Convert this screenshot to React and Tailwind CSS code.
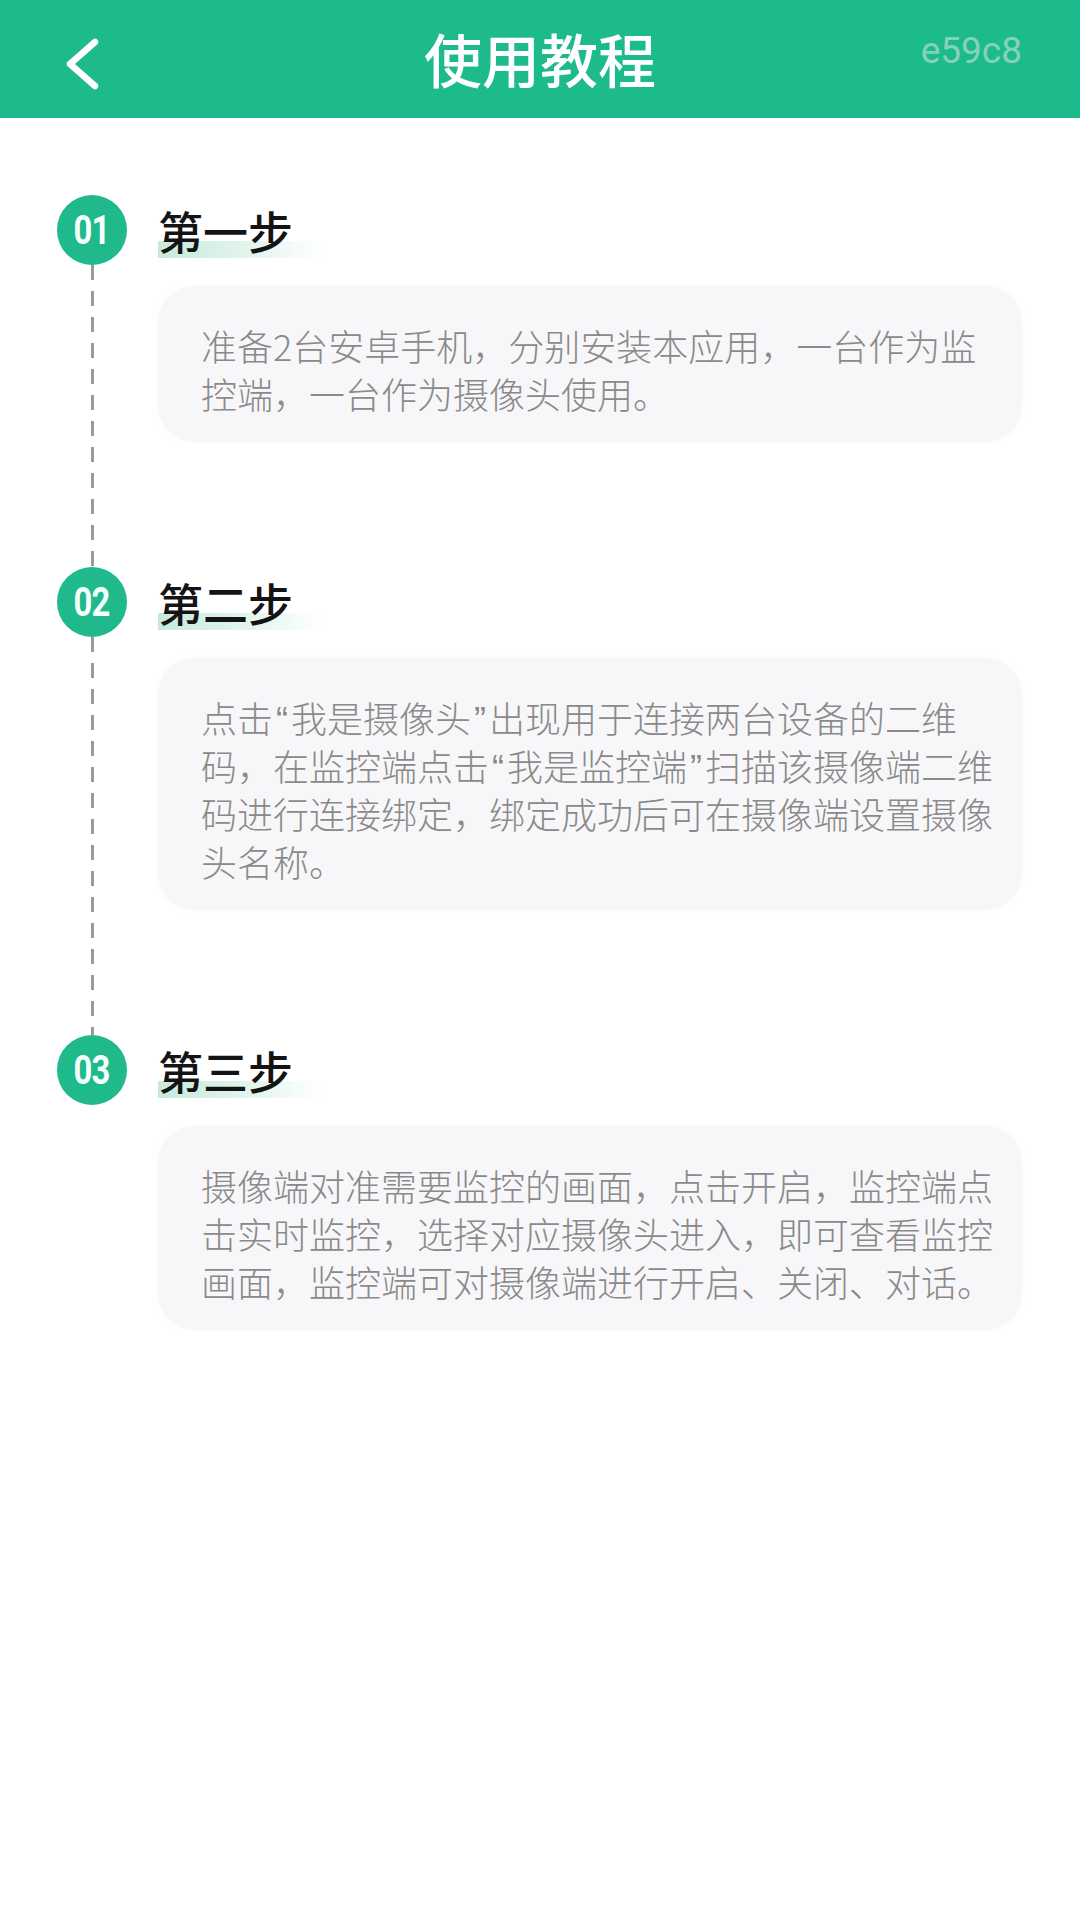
import React from "react";

const Q = ({ children }) => (
  <span className="font-['Liberation_Sans',sans-serif] px-[3px] leading-none">{children}</span>
);

const steps = [
  {
    no: "01",
    title: "第一步",
    lines: ["准备2台安卓手机，分别安装本应用，一台作为监", "控端，一台作为摄像头使用。"],
  },
  {
    no: "02",
    title: "第二步",
    lines: [
      <>点击<Q>“</Q>我是摄像头<Q>”</Q>出现用于连接两台设备的二维</>,
      <>码，在监控端点击<Q>“</Q>我是监控端<Q>”</Q>扫描该摄像端二维</>,
      "码进行连接绑定，绑定成功后可在摄像端设置摄像",
      "头名称。",
    ],
  },
  {
    no: "03",
    title: "第三步",
    lines: [
      "摄像端对准需要监控的画面，点击开启，监控端点",
      "击实时监控，选择对应摄像头进入，即可查看监控",
      "画面，监控端可对摄像端进行开启、关闭、对话。",
    ],
  },
];

function Step({ step, last }) {
  return (
    <div className="flex">
      <div className="flex w-[70px] flex-col items-center">
        <div className="flex h-[70px] w-[70px] shrink-0 items-center justify-center rounded-full bg-[#1fb98b]">
          <span className="inline-block scale-x-[0.8] font-['Roboto',sans-serif] text-[41px] font-bold leading-none tracking-[-1px] text-[#f4fffb]">
            {step.no}
          </span>
        </div>
        {!last && (
          <div className="w-[3px] flex-1 bg-[repeating-linear-gradient(to_bottom,#9a9a9a_0px,#9a9a9a_15px,transparent_15px,transparent_26px)]" />
        )}
      </div>
      <div className={`ml-[31px] mr-[58px] min-w-0 flex-1 ${last ? "" : "pb-[125px]"}`}>
        <div className="flex h-[70px] items-center">
          <span className="inline-block bg-[linear-gradient(to_right,#c6eadb,#e6f6ef_60%,#ffffff00)] bg-[length:100%_17px] bg-bottom bg-no-repeat pr-[30px] pt-[5px] pb-[5px] text-[45px] font-medium leading-[45px] text-[#141414]">
            {step.title}
          </span>
        </div>
        <div className="mt-[21px] rounded-[36px] bg-[#f7f7f9] pb-[25px] pl-[43px] pr-[20px] pt-[35px] shadow-[0_0_12px_rgba(0,0,0,0.02)]">
          {step.lines.map((l, i) => (
            <div
              key={i}
              className="h-[48px] whitespace-nowrap text-[36px] font-light leading-[48px] text-[#8a8a8a]"
            >
              {l}
            </div>
          ))}
        </div>
      </div>
    </div>
  );
}

export default function App() {
  return (
    <div className="min-h-[1920px] w-[1080px] bg-white font-['Noto_Sans_CJK_SC','Noto_Sans',sans-serif]">
      <header className="relative flex h-[118px] items-center justify-center bg-[#1dba8b] pb-[2px]">
        <div className="absolute left-[60px] top-[36px]">
          <svg width="44" height="56" viewBox="0 0 44 56" fill="none">
            <path
              d="M35 6 L10 28 L35 50"
              stroke="white"
              strokeWidth="6.5"
              strokeLinecap="round"
              strokeLinejoin="round"
            />
          </svg>
        </div>
        <h1 className="text-[58px] font-medium leading-none text-white">使用教程</h1>
        <span className="absolute right-[58px] top-[32px] font-['Roboto',sans-serif] text-[37px] leading-none text-[#86d2b9]">
          e59c8
        </span>
      </header>
      <main className="pl-[57px] pt-[77px]">
        {steps.map((s, i) => (
          <Step key={s.no} step={s} last={i === steps.length - 1} />
        ))}
      </main>
    </div>
  );
}
